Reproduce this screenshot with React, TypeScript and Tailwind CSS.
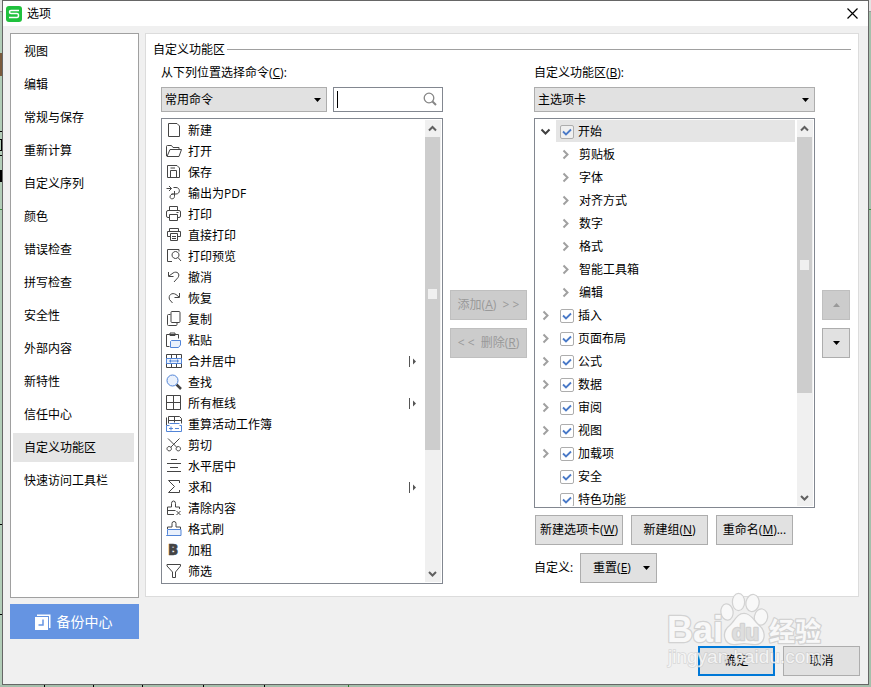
import { useState } from 'react';
import type { ReactNode } from 'react';
import clsx from 'clsx';

const categories = [
  '视图', '编辑', '常规与保存', '重新计算', '自定义序列', '颜色', '错误检查',
  '拼写检查', '安全性', '外部内容', '新特性', '信任中心', '自定义功能区', '快速访问工具栏',
];

interface Command {
  label: string;
  icon: ReactNode;
  split?: boolean;
}

// All command icons are drawn on a 17x17 grid
const commands: Command[] = [
  { label: '新建', icon: <path d="M2.5 1.5h8.5l2.5 2.5v10.5h-11z" /> },
  { label: '打开', icon: <path d="M.5 13V3.5q0-1 1-1h4l1.5 2h6v2.5M1 13.5l3-7h11.5l-2.5 7z" /> },
  { label: '保存', icon: <path d="M1.5 1.5h9.5l2.5 2.5v9.5h-12zM4.5 13.5v-7h6v7M4.5 4h4.5" /> },
  { label: '输出为PDF', icon: <path d="M.5 3.5h5M3 1l2.5 2.5-2.5 2.5M7.5 2.5h2.5c4.5 0 4.5 6.5 0 6.5H5.5M8.5 6v5.500c0 3-4.500 3-4.500.5 0-2 1.5-3 3.5-3" /> },
  { label: '打印', icon: <path d="M3.5 4.5v-4h8v4M3.5 11.5h-1.5q-1.5 0-1.5-1.5v-4q0-1.5 1.5-1.5h11q1.5 0 1.5 1.5v4q0 1.5-1.5 1.5h-1.5M3.5 8.5h8v6h-8zM10.5 6.5h2" /> },
  { label: '直接打印', icon: <path d="M3.5 4v-2.5h9v2.5M4 9.5h-2.5v-5h13v5h-2.5M4.5 6.5h7v7h-7zM6 9.5h4M6 11.5h4" /> },
  { label: '打印预览', icon: <path d="M6 13.5h-4.500v-12h11.5v2M12 9.5l3 3.5M9.5 3.5a3.5 3.5 0 1 0 .01 0" /> },
  { label: '撤消', icon: <path d="M2.5 3v4.5h5M3 7l4-3c4-2.5 7.5 1 5 4.5l-4 4.5" /> },
  { label: '恢复', icon: <path d="M13.5 3v4.5h-5M13 7l-3-2.5c-4-2.5-8 .5-6.5 5l3 3.5" /> },
  { label: '复制', icon: <path d="M6 .5h7q1 0 1 1v9q0 1-1 1h-7q-1 0-1-1v-9q0-1 1-1zM4.5 3.5h-2q-1 0-1 1v9q0 1 1 1h7.5q1 0 1-1v-1.5" /> },
  {
    label: '粘贴',
    icon: (
      <>
        <path d="M3.5 14.5h-3v-12h12v4M4 1h5v2.5h-5z" />
        <path d="M5.5 8.5h9v4.5l-2 2.5h-8v-6z" fill="#eaf1fc" stroke="#5285d8" />
      </>
    ),
  },
  {
    label: '合并居中',
    split: true,
    icon: (
      <>
        <path d="M.5 1.5h15v13h-15zM5.5 1.5v4M10.5 1.5v4M5.5 11v3.5M10.5 11v3.5" />
        <path d="M.5 5.5h15v5h-15z" fill="#eaf1fc" stroke="#5285d8" />
        <path d="M3 8h10M4.5 6.5v3M11.5 6.5v3" stroke="#5285d8" />
      </>
    ),
  },
  {
    label: '查找',
    icon: (
      <>
        <path d="M10.5 10.5l4.5 4.5" strokeWidth="2.5" />
        <circle cx="6.5" cy="6.5" r="5.5" fill="#eaf1fc" stroke="#5285d8" />
      </>
    ),
  },
  { label: '所有框线', icon: <path d="M.5.5h14v14h-14zM7.5.5v14M.5 7.5h14" />, split: true },
  {
    label: '重算活动工作簿',
    icon: (
      <>
        <path d="M.5 1.5v8M2.5 7.5v-7h11l2 2v5M2.5 4.5h12.5M8.500.5v6" />
        <path d="M3.5 9.5h-3v6h15v-6h-2M3.5 7.5h10M3 12.500h4M5 10.500v4M9 12.500h4" stroke="#5285d8" />
      </>
    ),
  },
  { label: '剪切', icon: <path d="M2 1.5l9 9M13.5 1.5l-9 9M3.2 9.500a2.2 2.2 0 1 0 .01 0M12.3 9.500a2.2 2.2 0 1 0 .01 0" /> },
  { label: '水平居中', icon: <path d="M5 1.5h6M1 5.5h14M4 9.5h8M1 13.5h14" /> },
  { label: '求和', icon: <path d="M13.5 4v-2.5h-11l6 6-6 6h11v-2.5" />, split: true },
  { label: '清除内容', icon: <path d="M8 14.5h-6.5v-7.5h4v-3.5q0-2.5 2-2.5t2 2.5v3.5h4v2M1.5 10.5h8M10.5 11l4 4M14.5 11l-4 4" /> },
  {
    label: '格式刷',
    icon: (
      <>
        <path d="M1.5 8v-2h4.500v-3.5q0-2 2-2t2 2v3.5h4.500v2" />
        <path d="M1.5 8.5h13.5v6h-14.5l1-1z" fill="#eaf1fc" stroke="#5285d8" />
      </>
    ),
  },
  {
    label: '加粗',
    icon: <text x="2" y="13" fontSize="15" fontWeight="800" fill="#444444" stroke="#444444" strokeWidth=".5">B</text>,
  },
  { label: '筛选', icon: <path d="M1 1.5h13.5v1.5l-5 6v5.5h-3v-5.5l-5.5-6z" /> },
];

interface TreeNode {
  label: string;
  child?: boolean;
  leaf?: boolean;
  open?: boolean;
}

const tree: TreeNode[] = [
  { label: '开始', open: true },
  { label: '剪贴板', child: true },
  { label: '字体', child: true },
  { label: '对齐方式', child: true },
  { label: '数字', child: true },
  { label: '格式', child: true },
  { label: '智能工具箱', child: true },
  { label: '编辑', child: true },
  { label: '插入' },
  { label: '页面布局' },
  { label: '公式' },
  { label: '数据' },
  { label: '审阅' },
  { label: '视图' },
  { label: '加载项' },
  { label: '安全', leaf: true },
  { label: '特色功能', leaf: true },
];

function Button({ className, children, disabled, label }: { className?: string; children: ReactNode; disabled?: boolean; label?: string }) {
  return (
    <button
      disabled={disabled}
      aria-label={label}
      className={clsx(
        'flex h-[30px] items-center justify-center border whitespace-nowrap',
        disabled ? 'border-[#bfbfbf] bg-[#cccccc] text-[#999999]' : 'border-[#adadad] bg-[#e1e1e1] text-black',
        className,
      )}
    >
      {children}
    </button>
  );
}

function Caret({ up }: { up?: boolean }) {
  return (
    <svg className="h-1 w-[7px] shrink-0" viewBox="0 0 7 4" fill="currentColor">
      <path d={up ? 'M0 4h7L3.5 0z' : 'M0 0h7L3.5 4z'} />
    </svg>
  );
}

function Select({ id, options }: { id: string; options: string[] }) {
  return (
    <div className="relative flex-1">
      <select id={id} className="block h-[25px] w-full appearance-none border border-[#adadad] bg-[#e1e1e1] pr-5 pl-[3px]">
        {options.map((o) => <option key={o}>{o}</option>)}
      </select>
      <span className="pointer-events-none absolute inset-y-0 right-[6px] flex items-center">
        <Caret />
      </span>
    </div>
  );
}

function ScrollBar({ thumb }: { thumb: string }) {
  return (
    <div className="my-px mr-px flex w-4 shrink-0 flex-col bg-[#f0f0f0]">
      <button aria-label="向上滚动" className="flex h-[17px] w-[15px] items-center justify-center">
        <svg className="h-[9px] w-[9px]" viewBox="0 0 9 9" fill="none" stroke="#606060" strokeWidth={2}>
          <path d="M1 6.5l3.5-3.5L8 6.5" />
        </svg>
      </button>
      <div className="flex-1">
        <div className={clsx('flex w-[15px] items-center justify-center bg-[#cdcdcd]', thumb)}>
          <span className="h-2.5 w-[9px] bg-[#f0f0f0]" />
        </div>
      </div>
      <button aria-label="向下滚动" className="flex h-[17px] w-[15px] items-center justify-center">
        <svg className="h-[9px] w-[9px]" viewBox="0 0 9 9" fill="none" stroke="#606060" strokeWidth={2}>
          <path d="M1 3l3.5 3.5L8 3" />
        </svg>
      </button>
    </div>
  );
}

function CommandList() {
  return (
    <div className="mt-1.5 flex border border-[#828790] bg-white">
      <ul className="flex-1 py-px">
        {commands.map((c) => (
          <li key={c.label} className="flex h-[21px] items-center pl-1">
            <svg className="h-[17px] w-[17px] shrink-0" viewBox="0 0 17 17" fill="none" stroke="#444444">
              {c.icon}
            </svg>
            <span className="ml-[5px] flex-1">{c.label}</span>
            {c.split && (
              <svg className="mr-2 h-[13px] w-2" viewBox="0 0 8 13">
                <path d="M.5 1v11" stroke="#555555" />
                <path d="M4 3.5l3 3-3 3z" fill="#555555" />
              </svg>
            )}
          </li>
        ))}
      </ul>
      <ScrollBar thumb="h-[313px]" />
    </div>
  );
}

function TreeRow({ node }: { node: TreeNode }) {
  const [checked, setChecked] = useState(true);
  return (
    <li className="flex h-[23px] items-start">
      <button
        aria-label={node.label}
        className={clsx('flex h-[22px] w-[21px] shrink-0 items-center justify-center', node.child && 'ml-5', node.leaf && 'invisible')}
      >
        <svg
          className="h-[11px] w-[11px]"
          viewBox="0 0 11 11"
          fill="none"
          stroke={node.open ? '#404040' : '#a0a0a0'}
          strokeWidth={2}
        >
          <path d={node.open ? 'M1.5 3.5l4 4 4-4' : 'M3.5 1.5l4 4-4 4'} />
        </svg>
      </button>
      {node.child ? (
        <span className="ml-[3px] leading-6">{node.label}</span>
      ) : (
        <label className={clsx('mr-0.5 flex h-[22px] flex-1 items-center pt-0.5 pl-1', node.open && 'bg-[#e5e5e5]')}>
          <span className="relative h-3.5 w-3.5">
            <input
              type="checkbox"
              checked={checked}
              onChange={(e) => setChecked(e.target.checked)}
              className={clsx('block h-3.5 w-3.5 appearance-none rounded-xs border border-[#adadad]', node.open ? 'bg-[#f0f0f0]' : 'bg-white')}
            />
            {checked && (
              <svg className="pointer-events-none absolute inset-0" viewBox="0 0 14 14" fill="none" stroke="#4a7ac8" strokeWidth={1.8}>
                <path d="M3 6.5l3 3 5-5" />
              </svg>
            )}
          </span>
          <span className="ml-1">{node.label}</span>
        </label>
      )}
    </li>
  );
}

function Watermark() {
  return (
    <svg className="pointer-events-none absolute right-[38px] bottom-3 h-[82px] w-[170px]" viewBox="0 0 170 82" aria-hidden="true">
      <g
        fill="#f8f8f8"
        stroke="#d2d2d2"
        strokeWidth={2.5}
        strokeLinejoin="round"
        paintOrder="stroke"
        fontFamily="'Liberation Sans', 'Noto Sans CJK SC', sans-serif"
      >
        <text x="7" y="52" fontSize="36" fontWeight="700">Bai</text>
        <ellipse cx="67" cy="22" rx="5.5" ry="7.5" transform="rotate(-8 67 22)" />
        <ellipse cx="78.5" cy="12" rx="5.5" ry="8" />
        <ellipse cx="92.5" cy="13" rx="6" ry="8" transform="rotate(10 92.5 13)" />
        <ellipse cx="101" cy="27" rx="6" ry="7.5" transform="rotate(10 101 27)" />
        <path d="M84 24c-7 0-9 8-14 12-8 6-6 18 4 18 4 0 6-1 10-1s7 1 11 1c10 0 11-12 4-18-5-4-8-12-15-12z" />
        <text x="72" y="50" fontSize="22" fontWeight="700" fill="#dedede">du</text>
        <text x="109" y="51" fontSize="26" fontWeight="700">经验</text>
      </g>
      <text
        x="8"
        y="73"
        fontSize="19"
        fill="#ffffff"
        fillOpacity={0.75}
        stroke="#c0c0c0"
        strokeOpacity={0.5}
        strokeWidth={1.5}
        paintOrder="stroke"
        fontFamily="'Liberation Sans', sans-serif"
      >
        jingyan.baidu.com
      </text>
    </svg>
  );
}

export default function App() {
  const [active, setActive] = useState('自定义功能区');
  const [query, setQuery] = useState('');

  return (
    <div className="flex min-h-screen flex-col bg-[#a5bfab] font-['Open_Sans','Noto_Sans_CJK_SC',sans-serif] text-[12px] leading-4 text-black">
      <div className="flex flex-1">
        {/* Slice of the worksheet on the left */}
        <div className="flex w-0.5 flex-col bg-[#b2cdb8]">
          <div className="h-3 border-b border-[#999999] bg-[#e4e4e4]" />
          <div className="h-[41px]" />
          <div className="h-[23px] bg-[#7a5a3c]" />
          <div className="h-14 border-b border-black" />
          <div className="h-2 border-b border-black" />
          <div className="h-2.5 border-r border-black" />
          <div className="h-1.5 border-y border-black" />
          <div className="mt-[14px] h-3 bg-black" />
          <div className="h-7 border-b border-[#3c8c3c]" />
          <div className="h-[315px] border-b border-black" />
          <div className="h-[90px] border-b border-black" />
        </div>

        <div className="relative flex flex-1 flex-col border border-[#666666] bg-[#f0f0f0]">
          {/* Title bar */}
          <header className="flex h-[25px] items-center bg-white pr-2.5 pl-[3px]">
            <svg className="h-4 w-4" viewBox="0 0 16 16">
              <rect width="16" height="16" rx="3" fill="#1fc13d" />
              <path d="M13 4.5H5q-1.5 0-1.5 1.5t1.5 1.5h6q1.5 0 1.5 2t-1.5 2h-8" fill="none" stroke="#ffffff" strokeWidth={1.5} />
            </svg>
            <h1 className="ml-[5px] flex-1">选项</h1>
            <button aria-label="关闭">
              <svg className="h-[11px] w-[11px]" viewBox="0 0 11 11" fill="none" stroke="#000000" strokeWidth={1.2}>
                <path d="M.5.5l10 10M10.5.5l-10 10" />
              </svg>
            </button>
          </header>

          <main className="flex flex-1 gap-1.5 pt-[7px] pr-[9px] pl-[7px]">
            {/* Categories */}
            <nav className="flex w-[129px] flex-col gap-1 border border-[#a0a0a0] bg-white pt-[3px] pr-1 pl-0.5">
              {categories.map((c) => (
                <button
                  key={c}
                  onClick={() => setActive(c)}
                  className={clsx('h-[29px] pl-[11px] text-left', c === active && 'bg-[#e5e5e5]')}
                >
                  {c}
                </button>
              ))}
            </nav>

            <section className="mb-px flex-1 border border-[#dcdcdc] bg-white px-[7px] pt-[7px] pb-3">
              <div className="flex items-center gap-0.5">
                <h2 className="h-4 leading-[18px]">自定义功能区</h2>
                <span className="h-px flex-1 bg-[#a0a0a0]" />
              </div>

              <div className="flex gap-[7px] pr-px pl-2">
                {/* Available commands */}
                <div className="w-[282px] pt-[7px]">
                  <label htmlFor="source" className="block h-4 leading-[18px]">从下列位置选择命令(<u>C</u>):</label>
                  <div className="mt-[7px] flex gap-1.5">
                    <Select id="source" options={['常用命令']} />
                    <div className="relative w-[110px]">
                      <input
                        aria-label="搜索命令"
                        value={query}
                        onChange={(e) => setQuery(e.target.value)}
                        className="block h-[25px] w-full border border-[#828790] bg-white pr-6 pl-1 outline-none"
                      />
                      {query === '' && <span className="absolute top-1 left-1 h-[17px] w-px bg-black" />}
                      <svg className="pointer-events-none absolute top-[5px] right-[6px] h-[14px] w-[14px]" viewBox="0 0 14 14" fill="none" stroke="#868686" strokeWidth={1.3}>
                        <circle cx="6" cy="6" r="4.8" />
                        <path d="M9.5 9.5l3.5 3.5" strokeWidth={2} />
                      </svg>
                    </div>
                  </div>
                  <CommandList />
                </div>

                <div className="flex w-[77px] flex-col justify-center gap-2 pt-[7px]">
                  <Button disabled><span>添加(<u>A</u>) &nbsp;&gt; &gt;</span></Button>
                  <Button disabled><span>&lt; &lt; &nbsp;删除(<u>R</u>)</span></Button>
                </div>

                {/* Ribbon tabs */}
                <div className="flex-1 pt-[7px]">
                  <label htmlFor="target" className="block h-4 leading-[18px]">自定义功能区(<u>B</u>):</label>
                  <div className="mt-[7px] flex">
                    <Select id="target" options={['主选项卡']} />
                  </div>
                  <div className="mt-1.5 flex h-[390px] border border-[#828790] bg-white">
                    <ul className="my-px flex-1 overflow-hidden">
                      {tree.map((n) => <TreeRow key={n.label + (n.child ? '-group' : '')} node={n} />)}
                    </ul>
                    <ScrollBar thumb="h-64" />
                  </div>
                  <div className="mt-[7px] flex gap-2 pl-px">
                    <Button className="w-[88px]"><span>新建选项卡(<u>W</u>)</span></Button>
                    <Button className="w-[77px]"><span>新建组(<u>N</u>)</span></Button>
                    <Button className="w-[77px]"><span>重命名(<u>M</u>)...</span></Button>
                  </div>
                  <div className="mt-2 flex items-center">
                    <span className="w-[46px]">自定义:</span>
                    <Button className="w-[77px] gap-3 pl-1.5"><span>重置(<u>E</u>)</span><Caret /></Button>
                  </div>
                </div>

                <div className="flex w-7 flex-col justify-center gap-2 pt-[7px]">
                  <Button disabled label="上移"><Caret up /></Button>
                  <Button label="下移"><Caret /></Button>
                </div>
              </div>
            </section>
          </main>

          <footer className="flex h-[86px] items-start justify-between pt-1.5 pr-2 pl-[7px]">
            <button className="flex h-[35px] w-[129px] items-center justify-center gap-1.5 bg-[#6594e2] pr-0.5 text-[14px] text-white">
              <svg className="h-4 w-4" viewBox="0 0 16 16">
                <path d="M2 .5h13.5V14h-1.5V2H2z" fill="#ffffff" />
                <path d="M0 3h13v13H0z" fill="#ffffff" />
                <path d="M8 5.5v5.5H3.5" fill="none" stroke="#6594e2" strokeWidth={1.5} />
              </svg>
              备份中心
            </button>
            <div className="z-10 flex gap-2 self-end pb-2">
              <Button className="w-[77px] outline-2 -outline-offset-2 outline-[#0078d7]">确定</Button>
              <Button className="w-[77px]">取消</Button>
            </div>
          </footer>
          <div className="pointer-events-none z-20">
            <Watermark />
          </div>
        </div>

        <div className="flex w-0.5 flex-col">
          <div className="h-3 border-b border-[#999999] bg-[#e4e4e4]" />
          <div className="h-[198px] border-b border-[#3c8c3c]" />
        </div>
      </div>

      {/* Slice of the worksheet below */}
      <div className="flex h-0.5">
        <div className="w-[45px] border-r border-black" />
        <div className="w-[49px] border-r border-black" />
        <div className="w-[49px] border-r border-black" />
        <div className="w-[61px] border-r border-black" />
        <div className="w-[61px] border-r border-black" />
        <div className="w-[84px] border-r border-[#2c7c2c]" />
      </div>
    </div>
  );
}
